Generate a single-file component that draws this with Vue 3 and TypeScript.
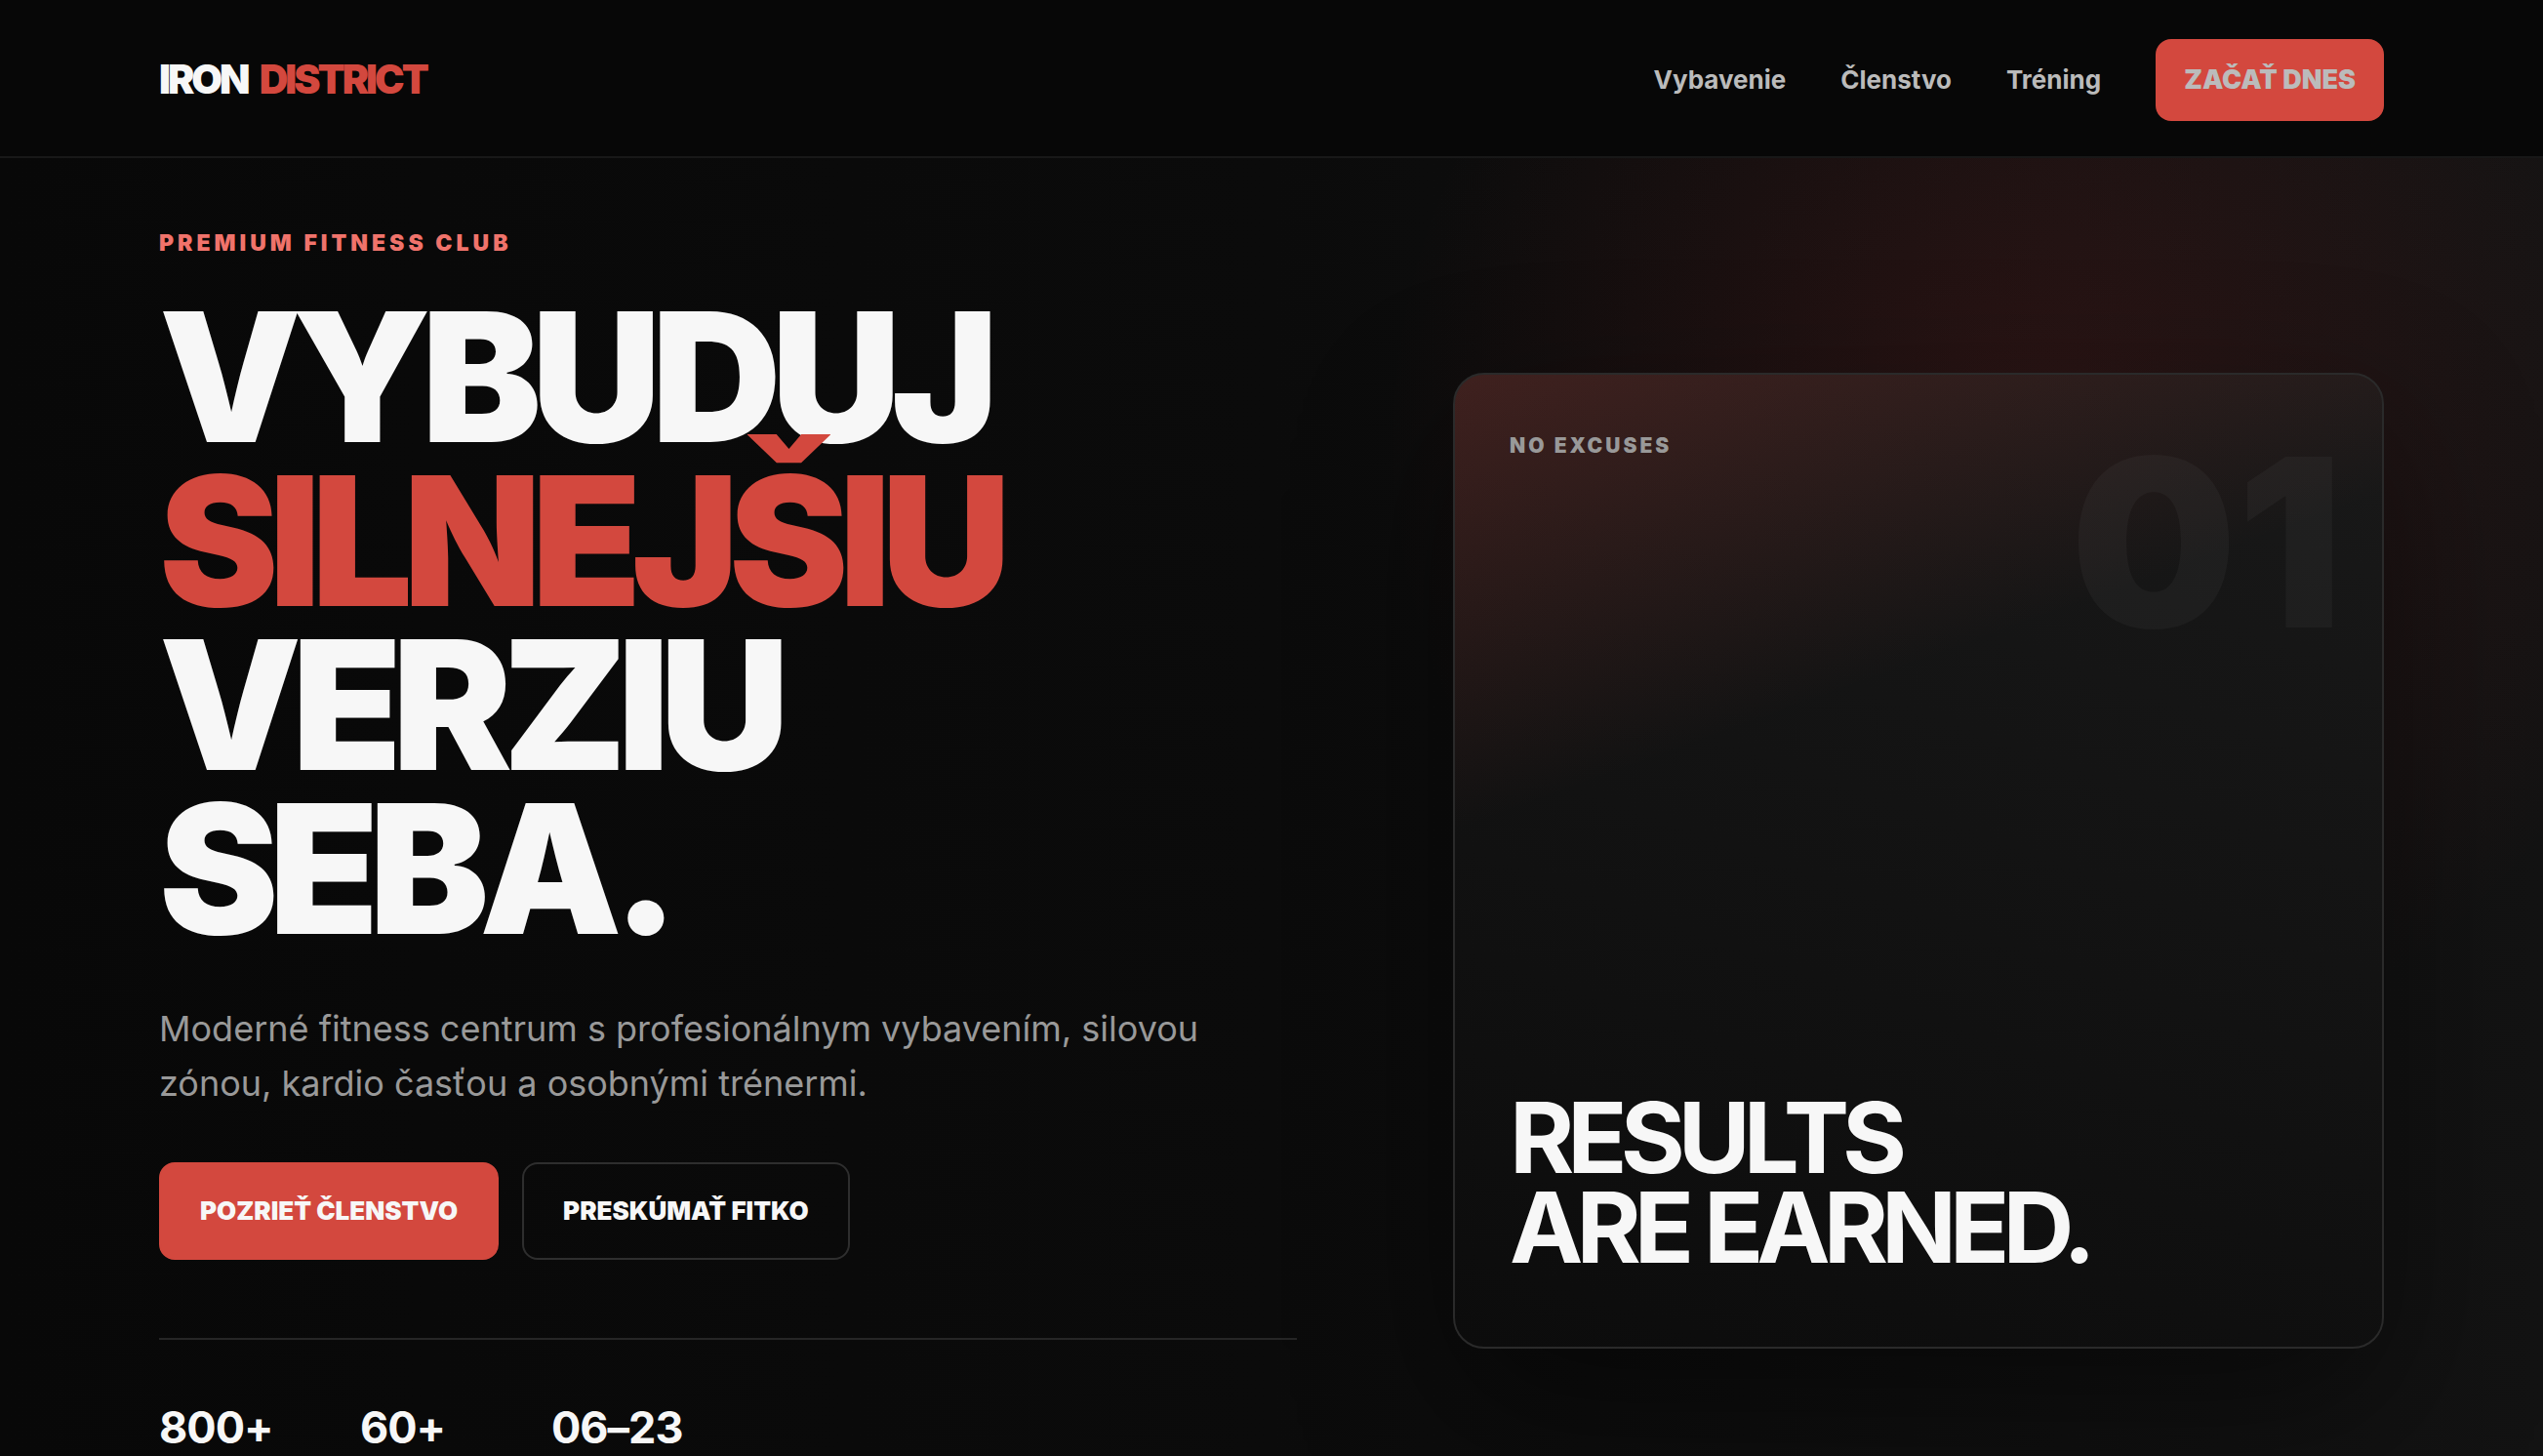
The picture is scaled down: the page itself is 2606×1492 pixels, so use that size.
<script setup lang="ts">
interface NavLink {
  label: string
  href: string
}

const links: NavLink[] = [
  { label: 'Vybavenie', href: '#vybavenie' },
  { label: 'Členstvo', href: '#clenstvo' },
  { label: 'Tréning', href: '#trening' },
]

const stats: string[] = ['800+', '60+', '06–23']
</script>

<template>
  <div class="page">
    <header class="site-header">
      <div class="container header-row">
        <a class="logo" href="#">IRON <span>DISTRICT</span></a>
        <nav class="nav">
          <a v-for="link in links" :key="link.href" class="nav-link" :href="link.href">{{ link.label }}</a>
          <a class="nav-cta" href="#clenstvo">ZAČAŤ DNES</a>
        </nav>
      </div>
    </header>

    <main class="hero">
      <div class="container hero-grid">
        <section class="intro">
          <p class="eyebrow">PREMIUM FITNESS CLUB</p>
          <h1 class="title">VYBUDUJ<br /><span>SILNEJŠIU</span><br />VERZIU<br />SEBA.</h1>
          <p class="lead">Moderné fitness centrum s profesionálnym vybavením, silovou zónou, kardio časťou a osobnými trénermi.</p>
          <div class="actions">
            <a class="btn btn-primary" href="#clenstvo">POZRIEŤ ČLENSTVO</a>
            <a class="btn btn-outline" href="#vybavenie">PRESKÚMAŤ FITKO</a>
          </div>
          <div class="stats">
            <strong v-for="stat in stats" :key="stat">{{ stat }}</strong>
          </div>
        </section>

        <aside class="card">
          <span class="card-number">01</span>
          <p class="card-label">NO EXCUSES</p>
          <h2 class="card-title">RESULTS<br />ARE EARNED.</h2>
        </aside>
      </div>
    </main>
  </div>
</template>

<style>
body {
  margin: 0;
  background: #080808;
}
</style>

<style scoped>
.page {
  height: 100vh;
  overflow: hidden;
  background: #080808;
  color: #f7f7f7;
  font-family: Inter, "Liberation Sans", sans-serif;
}

a {
  color: inherit;
  text-decoration: none;
}

h1,
h2,
p {
  margin: 0;
}

.container {
  width: calc(100% - 80px);
  max-width: 2280px;
  margin: 0 auto;
}

.site-header {
  background: #070707;
  border-bottom: 2px solid #181818;
}

.header-row {
  display: flex;
  align-items: center;
  justify-content: space-between;
  box-sizing: border-box;
  height: 160px;
  padding-top: 4px;
}

.logo {
  display: flex;
  gap: 12px;
  padding-bottom: 2px;
  font-size: 41px;
  font-weight: 900;
  letter-spacing: -3px;
}

.logo span,
.title span {
  color: #d3483e;
}

.nav {
  display: flex;
  align-items: center;
  gap: 56px;
  color: #bbbbbb;
  font-size: 26px;
  line-height: 40px;
}

.nav-link {
  font-weight: 700;
}

.nav-cta {
  padding: 22px 29px;
  border-radius: 16px;
  background: #d3483e;
  font-size: 27px;
  font-weight: 900;
}

.hero {
  display: flex;
  align-items: center;
  min-height: 1440px;
  background:
    radial-gradient(circle at 80% 20%, rgba(211, 47, 47, 0.14), transparent 28%),
    linear-gradient(90deg, #080808, #0b0b0b 50%, #131313);
}

.hero-grid {
  display: grid;
  grid-template-columns: 11fr 9fr;
  align-items: center;
  gap: 160px;
}

.eyebrow {
  margin-bottom: 33px;
  color: #f0736b;
  font-size: 23px;
  font-weight: 900;
  line-height: 40px;
  letter-spacing: 4px;
}

.title {
  font-size: 184px;
  font-weight: 900;
  line-height: 168px;
  letter-spacing: -10px;
}

.lead {
  max-width: 1120px;
  margin-top: 52px;
  color: #999999;
  font-size: 36px;
  line-height: 56px;
}

.actions {
  display: flex;
  gap: 24px;
  margin-top: 53px;
}

.btn {
  padding: 28px 40px;
  border: 2px solid #2e2e2e;
  border-radius: 16px;
  font-size: 26px;
  font-weight: 900;
  line-height: 40px;
}

.btn-primary {
  border-color: #d3483e;
  background: #d3483e;
}

.stats {
  display: grid;
  grid-template-columns: 150px 140px auto;
  gap: 56px;
  margin-top: 80px;
  padding: 54px 0 36px;
  border-top: 2px solid #262626;
  font-size: 45px;
  line-height: 72px;
  letter-spacing: -1px;
}

.card {
  position: relative;
  display: flex;
  flex-direction: column;
  justify-content: space-between;
  box-sizing: border-box;
  height: 1000px;
  padding: 56px 56px 77px;
  border: 2px solid #2a2a2a;
  border-radius: 32px;
  background:
    linear-gradient(160deg, rgba(211, 72, 62, 0.22), transparent 35%),
    linear-gradient(20deg, #0c0c0c, #191919);
  box-shadow: 0 60px 160px rgba(0, 0, 0, 0.45);
}

.card-number {
  position: absolute;
  top: 52px;
  right: 40px;
  color: rgba(255, 255, 255, 0.035);
  font-size: 240px;
  font-weight: 900;
  line-height: 1;
}

.card-label {
  color: #999999;
  font-size: 21px;
  font-weight: 900;
  line-height: 34px;
  letter-spacing: 3px;
}

.card-title {
  font-size: 101px;
  font-weight: 700;
  line-height: 92px;
  letter-spacing: -7px;
}
</style>
